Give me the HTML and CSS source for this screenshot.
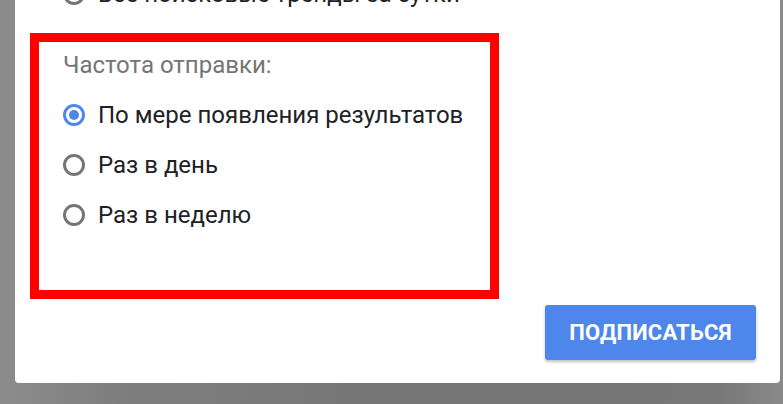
FILE: index.html
```html
<!DOCTYPE html>
<html lang="ru">
<head>
<meta charset="utf-8">
<title>Подписка</title>
<link rel="stylesheet" href="styles.css">
</head>
<body>
<div class="dialog">
  <label class="option option-cut"><span class="radio"></span><span class="text">Все поисковые тренды за сутки</span></label>
  <section class="frequency">
    <div class="caption">Частота отправки:</div>
    <label class="option"><span class="radio checked"></span><span class="text">По мере появления результатов</span></label>
    <label class="option"><span class="radio"></span><span class="text">Раз в день</span></label>
    <label class="option"><span class="radio"></span><span class="text">Раз в неделю</span></label>
  </section>
  <div class="actions"><button class="subscribe">ПОДПИСАТЬСЯ</button></div>
</div>
</body>
</html>
```
FILE: styles.css
```css
html, body {
  margin: 0;
  padding: 0;
}
body {
  width: 783px;
  height: 404px;
  overflow: hidden;
  background: linear-gradient(to right, #8c8c8c 0, #7e7e7e 120px, #767676 50%, #787878 92%, #8a8a8a 100%);
  font-family: Roboto, "Noto Sans", sans-serif;
}
.dialog {
  margin-left: 15px;
  width: 765px;
  height: 383px;
  box-sizing: border-box;
  padding: 0 24px 0 15px;
  background: #fff;
  border-radius: 0 0 4px 4px;
  overflow: hidden;
  display: flex;
  flex-direction: column;
}
.option {
  display: flex;
  align-items: center;
  height: 50px;
  font-size: 24px;
  color: #202124;
}
.option-cut {
  margin-top: -31px;
  padding-left: 33px;
}
.radio {
  width: 22px;
  height: 22px;
  box-sizing: border-box;
  border: 3px solid #757575;
  border-radius: 50%;
  margin-right: 13px;
  display: flex;
  align-items: center;
  justify-content: center;
  flex: none;
}
.radio.checked {
  border-color: #4f86ec;
}
.radio.checked::after {
  content: "";
  width: 10px;
  height: 10px;
  border-radius: 50%;
  background: #4f86ec;
}
.frequency {
  margin-top: 14px;
  width: 469px;
  height: 266px;
  box-sizing: border-box;
  border: 9px solid #ff0000;
  padding: 8px 0 50px 24px;
}
.caption {
  height: 30px;
  line-height: 30px;
  margin-bottom: 10px;
  font-size: 24px;
  color: #757575;
}
.actions {
  display: flex;
  justify-content: flex-end;
  margin-top: 6px;
}
.subscribe {
  width: 211px;
  height: 55px;
  border: none;
  border-radius: 3px;
  background: #4f86ec;
  color: #fff;
  font-family: Roboto, "Noto Sans", sans-serif;
  font-weight: 700;
  font-size: 22px;
  letter-spacing: 0.2px;
  box-shadow: 0 2px 3px rgba(0,0,0,0.25);
  padding: 0;
}
```
